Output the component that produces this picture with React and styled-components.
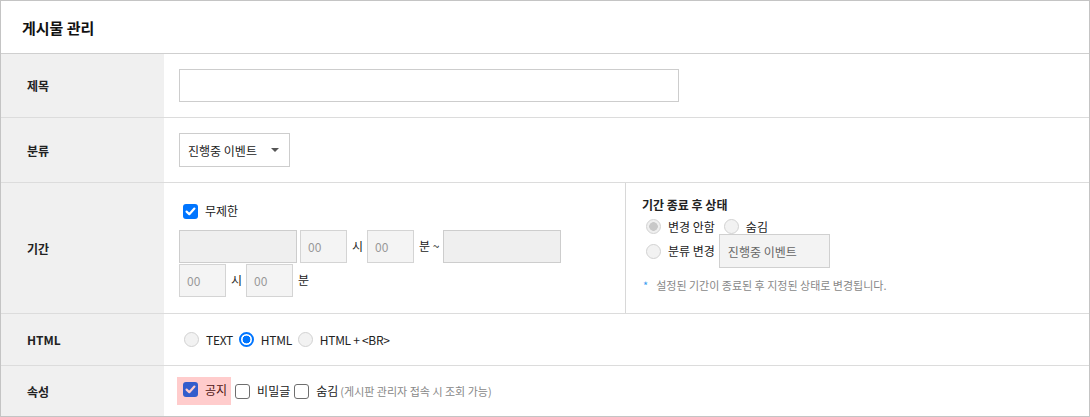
import React from 'react';
import styled, { createGlobalStyle } from 'styled-components';

const GlobalStyle = createGlobalStyle`
	body {
		margin: 0;
		background: #fff;
		font-family: "Noto Sans CJK KR", "Noto Sans", sans-serif;
		color: #222;
	}
	* { box-sizing: border-box; }
`;

const Board = () => {
	return (
		<Panel>
			<GlobalStyle />
			<Header>게시물 관리</Header>

			<Row $h={63}>
				<Label>제목</Label>
				<Cell>
					<TextBox $w={500} />
				</Cell>
			</Row>

			<Row $h={64}>
				<Label>분류</Label>
				<Cell>
					<Select>
						진행중 이벤트
						<Caret />
					</Select>
				</Cell>
			</Row>

			<Row $h={130}>
				<Label>기간</Label>
				<Split>
					<PeriodLeft>
						<Option>
							<Check $on />
							무제한
						</Option>
						<TimeLine $top={11}>
							<DateBox />
							<TimeBox>00</TimeBox>
							<Unit>시</Unit>
							<TimeBox>00</TimeBox>
							<Unit>분 ~</Unit>
							<DateBox />
						</TimeLine>
						<TimeLine $top={1}>
							<TimeBox>00</TimeBox>
							<Unit>시</Unit>
							<TimeBox>00</TimeBox>
							<Unit>분</Unit>
						</TimeLine>
					</PeriodLeft>
					<PeriodRight>
						<SubTitle>기간 종료 후 상태</SubTitle>
						<RadioLine $h={15} $top={6}>
							<Option>
								<Radio $on $off />
								변경 안함
							</Option>
							<Option>
								<Radio $off />
								숨김
							</Option>
						</RadioLine>
						<RadioLine $h={34} $top={0}>
							<Option>
								<Radio $off />
								분류 변경
							</Option>
							<GrayBox>진행중 이벤트</GrayBox>
						</RadioLine>
						<Note>
							<Star>*</Star>
							설정된 기간이 종료된 후 지정된 상태로 변경됩니다.
						</Note>
					</PeriodRight>
				</Split>
			</Row>

			<Row $h={51}>
				<Label>HTML</Label>
				<Cell>
					<Options $gap={6} $indent={5}>
						<Option $tight>
							<Radio />
							TEXT
						</Option>
						<Option $tight>
							<Radio $on />
							HTML
						</Option>
						<Option $tight>
							<Radio />
							HTML + &lt;BR&gt;
						</Option>
					</Options>
				</Cell>
			</Row>

			<Row $h={50}>
				<Label>속성</Label>
				<Cell>
					<Options $gap={4} $indent={-2}>
						<Highlight>
							<Option>
								<Check $on />
								공지
							</Option>
						</Highlight>
						<Option>
							<Check />
							비밀글
						</Option>
						<Option>
							<Check />
							숨김
							<Hint>(게시판 관리자 접속 시 조회 가능)</Hint>
						</Option>
					</Options>
				</Cell>
			</Row>
		</Panel>
	);
};

const CheckMark = () => (
	<svg width='15' height='15' viewBox='0 0 15 15'>
		<polyline
			points='3.6,7.6 6.3,10.2 11.4,4.6'
			fill='none'
			stroke='#fff'
			strokeWidth='2.2'
			strokeLinecap='round'
			strokeLinejoin='round'
		/>
	</svg>
);

const Check = ({ $on }) => (
	<CheckBox $on={$on}>{$on && <CheckMark />}</CheckBox>
);

const Panel = styled.div`
	width: 1090px;
	height: 417px;
	border: 1px solid #c4c4c4;
	display: flex;
	flex-direction: column;
`;

const Header = styled.div`
	height: 53px;
	flex: none;
	border-bottom: 1px solid #cfcfcf;
	display: flex;
	align-items: center;
	padding-left: 21px;
	font-size: 15px;
	font-weight: 700;
	color: #111;
`;

const Row = styled.div`
	display: grid;
	grid-template-columns: 163px 1fr;
	height: ${(p) => p.$h + 1}px;
	flex: none;
	border-top: 1px solid #dcdcdc;
	&:nth-of-type(2) {
		border-top: none;
		height: ${(p) => p.$h}px;
	}
`;

const Label = styled.div`
	background: #f0f0f0;
	display: flex;
	align-items: center;
	padding-left: 26px;
	font-size: 12px;
	font-weight: 700;
	color: #222;
`;

const Cell = styled.div`
	display: flex;
	align-items: center;
	padding-left: 15px;
	font-size: 12px;
`;

const TextBox = styled.div`
	width: ${(p) => p.$w}px;
	height: 33px;
	border: 1px solid #cdcdcd;
	background: #fff;
`;

const Select = styled.div`
	width: 111px;
	height: 34px;
	border: 1px solid #cdcdcd;
	display: flex;
	align-items: center;
	justify-content: space-between;
	padding: 0 10px 0 8px;
	font-size: 12px;
	color: #222;
`;

const Caret = styled.span`
	width: 0;
	height: 0;
	border-left: 4px solid transparent;
	border-right: 4px solid transparent;
	border-top: 4px solid #555;
`;

const Split = styled.div`
	display: grid;
	grid-template-columns: 462px 1fr;
`;

const PeriodLeft = styled.div`
	border-right: 1px solid #d8d8d8;
	padding: 20px 0 0 19px;
	font-size: 12px;
	display: flex;
	flex-direction: column;
	align-items: flex-start;
`;

const TimeLine = styled.div`
	display: flex;
	align-items: center;
	gap: 3px;
	margin-top: ${(p) => p.$top}px;
	margin-left: -4px;
`;

const DateBox = styled.div`
	width: 118px;
	height: 33px;
	border: 1px solid #cdcdcd;
	background: #efefef;
`;

const TimeBox = styled.div`
	width: 47px;
	height: 33px;
	border: 1px solid #d4d4d4;
	background: #f4f4f4;
	color: #999;
	font-size: 12px;
	display: flex;
	align-items: center;
	padding-left: 7px;
`;

const Unit = styled.span`
	font-size: 12px;
	padding: 0 1px 2px 2px;
	line-height: 16px;
`;

const PeriodRight = styled.div`
	padding: 14px 0 0 16px;
	display: flex;
	flex-direction: column;
	font-size: 12px;
`;

const SubTitle = styled.div`
	font-weight: 700;
	font-size: 12px;
	line-height: 16px;
	color: #222;
`;

const RadioLine = styled.div`
	display: flex;
	align-items: center;
	gap: 4px;
	height: ${(p) => p.$h}px;
	margin-top: ${(p) => p.$top}px;
	padding-left: 4px;
	& > *:nth-child(2) {
		margin-left: ${(p) => (p.$h > 20 ? 0 : 5)}px;
	}
`;

const GrayBox = styled.div`
	width: 111px;
	height: 34px;
	border: 1px solid #d0d0d0;
	background: #f3f3f3;
	color: #666;
	display: flex;
	align-items: center;
	padding-left: 8px;
	font-size: 12px;
`;

const Note = styled.div`
	margin-top: 10px;
	font-size: 11px;
	color: #888;
	display: flex;
	gap: 8px;
	line-height: 14px;
`;

const Star = styled.span`
	color: #3a9bf0;
	padding-left: 1px;
`;

const Options = styled.div`
	display: flex;
	align-items: center;
	gap: ${(p) => p.$gap}px;
	margin-left: ${(p) => p.$indent}px;
`;

const Option = styled.label`
	display: inline-flex;
	align-items: center;
	gap: 7px;
	font-size: 12px;
	line-height: 16px;
	color: #222;
	white-space: nowrap;
	letter-spacing: ${(p) => (p.$tight ? '-0.3px' : 'normal')};
`;

const Radio = styled.span`
	width: 15px;
	height: 15px;
	flex: none;
	border-radius: 50%;
	border: ${(p) =>
		p.$on && !p.$off ? '2px solid #0075ff' : '1px solid #d2d2d2'};
	background: ${(p) =>
		p.$on && !p.$off
			? 'radial-gradient(circle, #0075ff 0 3.6px, #fff 4.2px)'
			: p.$on
			? 'radial-gradient(circle, #c8c8c8 0 4px, #efefef 4.6px)'
			: '#f2f2f2'};
`;

const CheckBox = styled.span`
	width: 15px;
	height: 15px;
	flex: none;
	border-radius: 3px;
	display: flex;
	background: ${(p) => (p.$on ? '#0075ff' : '#fff')};
	border: ${(p) => (p.$on ? 'none' : '1px solid #6e6e6e')};
`;

const Highlight = styled.div`
	position: relative;
	padding: 5px 4px 5px 6px;
	&::after {
		content: '';
		position: absolute;
		inset: 0;
		background: rgba(255, 0, 0, 0.2);
	}
`;

const Hint = styled.span`
	font-size: 11px;
	color: #888;
	margin-left: -5px;
`;

export default Board;
